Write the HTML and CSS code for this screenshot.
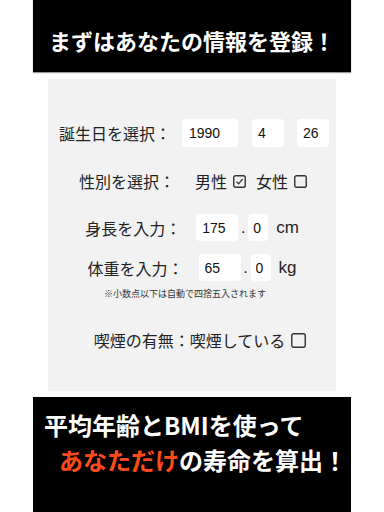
FILE: index.html
```html
<!DOCTYPE html>
<html lang="ja">
<head>
  <meta charset="utf-8">
  <title>寿命チェック</title>
  <link rel="stylesheet" href="styles.css">
</head>
<body>
  <div class="page">
    <div class="banner top">まずはあなたの情報を登録！</div>
    <div class="panel">
      <div class="row birth">
        <span class="label">誕生日を選択：</span>
        <input class="field year" type="text" value="1990" readonly>
        <input class="field small" type="text" value="4" readonly>
        <input class="field small" type="text" value="26" readonly>
      </div>
      <div class="row gender">
        <span class="label">性別を選択：</span>
        <span class="opt">男性</span>
        <svg class="check male" width="13" height="13" viewBox="0 0 13 13"><rect x="0.75" y="0.75" width="11.5" height="11.5" rx="1.8" fill="none" stroke="#333" stroke-width="1.4"/><path d="M3.4 6.6 L5.6 8.8 L9.6 4" fill="none" stroke="#333" stroke-width="1.3"/></svg>
        <span class="opt">女性</span>
        <svg class="check" width="13" height="13" viewBox="0 0 13 13"><rect x="0.75" y="0.75" width="11.5" height="11.5" rx="1.8" fill="none" stroke="#333" stroke-width="1.4"/></svg>
      </div>
      <div class="row body-row height">
        <span class="label">身長を入力：</span>
        <input class="field int" type="text" value="175" readonly>
        <span class="dot">.</span>
        <input class="field dec" type="text" value="0" readonly>
        <span class="unit">cm</span>
      </div>
      <div class="row body-row weight">
        <span class="label">体重を入力：</span>
        <input class="field int" type="text" value="65" readonly>
        <span class="dot">.</span>
        <input class="field dec" type="text" value="0" readonly>
        <span class="unit">kg</span>
      </div>
      <div class="note">※小数点以下は自動で四捨五入されます</div>
      <div class="row smoke">
        <span class="label">喫煙の有無：喫煙している</span>
        <svg class="check big" width="15" height="15" viewBox="0 0 15 15"><rect x="0.75" y="0.75" width="13.5" height="13.5" rx="2" fill="none" stroke="#333" stroke-width="1.4"/></svg>
      </div>
    </div>
    <div class="banner bottom">
      <div class="line">平均年齢とBMIを使って</div>
      <div class="line second"><span class="accent">あなただけ</span>の寿命を算出！</div>
    </div>
  </div>
</body>
</html>
```

FILE: styles.css
```css
body {
  margin: 0;
  background: #fff;
  font-family: "Noto Sans CJK JP", sans-serif;
  color: #222;
}
.page {
  width: 318px;
  margin: 0 auto;
}
.banner {
  background: #000;
  color: #fff;
  font-weight: bold;
}
.banner.top {
  height: 72px;
  box-sizing: border-box;
  padding-top: 26px;
  text-align: center;
  font-size: 22px;
  line-height: 28px;
  box-shadow: 0 1px 1px #999;
}
.panel {
  margin: 7px 15px 0;
  height: 312px;
  box-sizing: border-box;
  padding-top: 40px;
  background: #f2f2f2;
}
.row {
  display: flex;
  justify-content: center;
  align-items: center;
  font-size: 16px;
}
.row > * {
  flex: none;
}
.label {
  white-space: nowrap;
}
.field {
  border: none;
  border-radius: 4px;
  background: #fff;
  font-family: "Liberation Sans", Arial, sans-serif;
  font-size: 14px;
  color: #111;
  padding: 0 6px;
  box-sizing: border-box;
  outline: none;
}
.birth {
  height: 28px;
  margin-left: 4px;
}
.birth .label {
  margin-right: 11px;
}
.birth .field {
  height: 28px;
}
.birth .year {
  width: 56px;
  padding-left: 7px;
}
.birth .small {
  width: 32px;
  margin-left: 14px;
}
.birth .small:last-child {
  margin-left: 13px;
}
.gender {
  height: 24px;
  margin-top: 22px;
  margin-left: 2px;
}
.gender .label {
  margin-right: 20px;
}
.opt {
  margin-right: 6px;
}
.check {
  width: 13px;
  height: 13px;
}
.check.male {
  margin-right: 10px;
}
.body-row {
  height: 27px;
}
.body-row .label {
  margin-right: 15px;
}
.body-row .field {
  height: 27px;
}
.body-row .int {
  width: 42px;
}
.body-row .dec {
  width: 20px;
  padding: 0 5px;
}
.dot {
  width: 10px;
  text-align: center;
  font-family: "Liberation Sans", Arial, sans-serif;
}
.unit {
  margin-left: 8px;
  font-family: "Liberation Sans", Arial, sans-serif;
  font-size: 17px;
}
.height {
  margin-top: 21px;
}
.weight {
  margin-top: 13px;
}
.note {
  margin-top: 7px;
  height: 12px;
  line-height: 12px;
  font-size: 9px;
  color: #333;
  text-align: center;
  padding-right: 14px;
}
.smoke {
  height: 20px;
  margin-top: 30px;
  margin-left: 16px;
}
.check.big {
  width: 15px;
  height: 15px;
  margin-left: 6px;
}
.banner.bottom {
  margin-top: 6px;
  height: 120px;
  padding: 10px 0 0 11px;
  box-sizing: border-box;
  font-size: 24px;
  line-height: 35px;
}
.line.second {
  padding-left: 15px;
}
.accent {
  color: #ff4a1c;
}
```
